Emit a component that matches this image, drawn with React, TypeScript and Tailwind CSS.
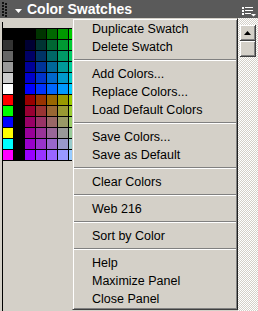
import React from 'react';

const HEX = ['00', '33', '66', '99', 'CC', 'FF'];
const FIRST_COL = ['000000', '333333', '666666', '999999', 'CCCCCC', 'FFFFFF', 'FF0000', '00FF00', '0000FF', 'FFFF00', '00FFFF', 'FF00FF'];

// web 216 cube laid out like the Macromedia swatch panel
const swatchRows: string[][] = Array.from({ length: 12 }, (_, row) => {
  const top = row < 6;
  const b = HEX[row % 6];
  const reds = top ? ['00', '33', '66'] : ['99', 'CC', 'FF'];
  const cells = ['#' + FIRST_COL[row], '#000000'];
  reds.forEach((r) => HEX.forEach((g) => cells.push('#' + r + g + b)));
  return cells;
});

type MenuEntry = { label: string } | { separator: true };

const menuItems: MenuEntry[] = [
  { label: 'Duplicate Swatch' },
  { label: 'Delete Swatch' },
  { separator: true },
  { label: 'Add Colors...' },
  { label: 'Replace Colors...' },
  { label: 'Load Default Colors' },
  { separator: true },
  { label: 'Save Colors...' },
  { label: 'Save as Default' },
  { separator: true },
  { label: 'Clear Colors' },
  { separator: true },
  { label: 'Web 216' },
  { separator: true },
  { label: 'Sort by Color' },
  { separator: true },
  { label: 'Help' },
  { label: 'Maximize Panel' },
  { label: 'Close Panel' },
];

const TitleBar = () => (
  <div className="relative flex h-[18px] items-center bg-[#5a5a5a]">
    <svg className="absolute left-[1px] top-[1px]" width="7" height="16" viewBox="0 0 7 16">
      {[1, 4, 7, 10, 13].map((y) => (
        <g key={y}>
          <rect x="1" y={y} width="2" height="2" fill="#111" />
          <rect x="4" y={y + 1} width="2" height="2" fill="#111" />
        </g>
      ))}
    </svg>
    <svg className="absolute left-[15px] top-[9px]" width="7" height="4" viewBox="0 0 7 4">
      <polygon points="0,0 7,0 3.5,4" fill="#fff" />
    </svg>
    <span className="ml-[27px] text-[14px] font-bold leading-none text-white">Color Swatches</span>
    <svg className="absolute left-[241px] top-[6px]" width="15" height="11" viewBox="0 0 15 11">
      <rect x="1" y="1" width="2" height="2" fill="#fff" />
      <rect x="4" y="1" width="8" height="1" fill="#fff" />
      <rect x="1" y="4" width="2" height="2" fill="#fff" />
      <rect x="4" y="4" width="8" height="1" fill="#fff" />
      <rect x="1" y="7" width="2" height="2" fill="#fff" />
      <rect x="4" y="7" width="6" height="1" fill="#fff" />
      <polygon points="10,8 15,8 12.5,10.5" fill="#fff" />
    </svg>
  </div>
);

const Scrollbar = () => (
  <div className="flex w-[20px] flex-col bg-[repeating-conic-gradient(#d4d0c8_0%_25%,#ffffff_0%_50%)] bg-size-[2px_2px] pl-[2px] pt-[7px]">
    <div className="flex h-[16px] w-[16px] items-center justify-center border-b border-r border-[#404040] bg-[#d4d0c8] shadow-[inset_1px_1px_#ffffff,inset_-1px_-1px_#808080]">
      <svg width="7" height="4" viewBox="0 0 7 4">
        <polygon points="3.5,0 7,4 0,4" fill="#000" />
      </svg>
    </div>
    <div className="h-[16px] w-[16px] border-b border-r border-[#404040] bg-[#d4d0c8] shadow-[inset_1px_1px_#ffffff,inset_-1px_-1px_#808080]" />
  </div>
);

const OptionsMenu = () => (
  <div className="absolute left-[72px] top-[18px] w-[166px] h-[292px] border border-b-[#404040] border-r-[#202020] border-l-[#d4d0c8] border-t-[#d4d0c8] bg-[#d4d0c8] shadow-[inset_1px_1px_#ffffff,inset_-1px_-1px_#808080] pt-[1px]">
    {menuItems.map((item, i) =>
      'separator' in item ? (
        <div key={i} className="h-[9px] px-[1px] pt-[3px]">
          <div className="h-px bg-[#808080]" />
          <div className="h-px bg-white" />
        </div>
      ) : (
        <div key={i} className="flex h-[18px] items-center pl-[19px] text-[12.5px] text-black">
          {item.label}
        </div>
      )
    )}
  </div>
);

export default function App() {
  return (
    <div className="relative h-[311px] w-[258px] overflow-hidden bg-[#d4d0c8] font-['Liberation_Sans',Arial,sans-serif]">
      <TitleBar />
      <div className="flex h-[293px]">
        <div className="flex-1 pl-[2px] pt-[4px]">
          <div className="h-full border-l border-black">
            <div className="inline-grid grid-cols-[repeat(20,10px)] gap-px bg-black pb-px pr-px pt-px">
              {swatchRows.flat().map((c, i) => (
                <div key={i} className="h-[10px] w-[10px]" style={{ backgroundColor: c }} />
              ))}
            </div>
          </div>
        </div>
        <Scrollbar />
      </div>
      <OptionsMenu />
    </div>
  );
}
